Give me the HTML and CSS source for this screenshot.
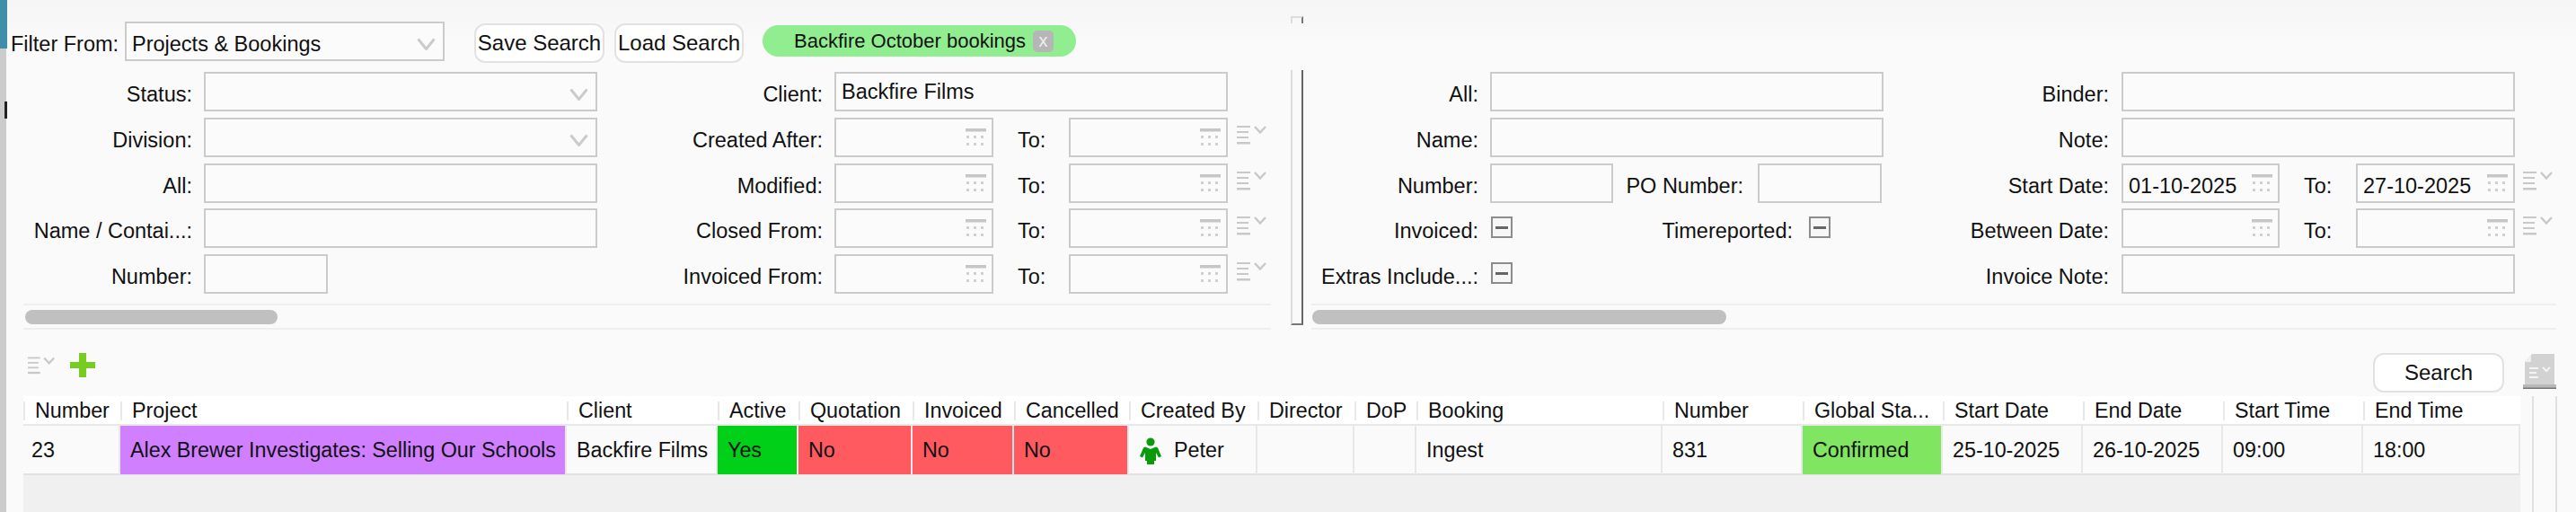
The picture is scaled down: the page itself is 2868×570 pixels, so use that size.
FILE: index.html
```html
<!DOCTYPE html>
<html lang="en">
<head>
<meta charset="utf-8">
<title>Filter bookings</title>
<link rel="stylesheet" href="styles.css">
</head>
<body>
<svg class="sprites" xmlns="http://www.w3.org/2000/svg">
  <symbol id="chev" viewBox="0 0 21 14"><path d="M1.5 1.5 10.5 12.5 19.5 1.5" fill="none" stroke="#cbcbcb" stroke-width="3"/></symbol>
  <symbol id="cal" viewBox="0 0 24 24">
    <rect x="1" y="0" width="23" height="3.5" fill="#c6c6c6"/>
    <g fill="#d0d0d0">
      <rect x="2" y="8" width="3" height="3"/><rect x="10" y="8" width="3" height="3"/><rect x="18" y="8" width="3" height="3"/>
      <rect x="2" y="16" width="3" height="3"/><rect x="10" y="16" width="3" height="3"/><rect x="18" y="16" width="3" height="3"/>
    </g>
  </symbol>
  <symbol id="menu" viewBox="0 0 33 22">
    <g fill="#c8c8c8"><rect x="0" y="0" width="15" height="2"/><rect x="0" y="6" width="13" height="2"/><rect x="0" y="12" width="13" height="2"/><rect x="0" y="18" width="15" height="2.5"/></g>
    <path d="M20 1 26 7.5 32 1" fill="none" stroke="#c8c8c8" stroke-width="2.4"/>
  </symbol>
</svg>
<div class="window">
  <div class="rail"><div class="rail-accent"></div><div class="rail-mark"></div></div>
  <main class="main">
    <header class="topbar">
      <span class="filter-label">Filter From:</span>
      <div class="box combo combo-from"><span class="val">Projects &amp; Bookings</span><svg class="chev"><use href="#chev"/></svg></div>
      <button class="btn btn-save">Save Search</button>
      <button class="btn btn-load">Load Search</button>
      <div class="pill"><span>Backfire October bookings</span><span class="pill-x">x</span></div>
      <div class="tab-notch"></div>
    </header>

    <section class="panels">
      <div class="panel panel-left">
        <div class="form form-left">
          <label class="lab">Status:</label>
          <div class="box combo"><span class="val"></span><svg class="chev"><use href="#chev"/></svg></div>
          <label class="lab">Client:</label>
          <div class="box span3"><span class="val">Backfire Films</span></div>
          <span></span>

          <label class="lab">Division:</label>
          <div class="box combo"><span class="val"></span><svg class="chev"><use href="#chev"/></svg></div>
          <label class="lab">Created After:</label>
          <div class="box date"><span class="val"></span><svg class="cal"><use href="#cal"/></svg></div>
          <label class="lab-to">To:</label>
          <div class="box date"><span class="val"></span><svg class="cal"><use href="#cal"/></svg></div>
          <svg class="menu"><use href="#menu"/></svg>

          <label class="lab">All:</label>
          <div class="box"></div>
          <label class="lab">Modified:</label>
          <div class="box date"><span class="val"></span><svg class="cal"><use href="#cal"/></svg></div>
          <label class="lab-to">To:</label>
          <div class="box date"><span class="val"></span><svg class="cal"><use href="#cal"/></svg></div>
          <svg class="menu"><use href="#menu"/></svg>

          <label class="lab">Name / Contai...:</label>
          <div class="box"></div>
          <label class="lab">Closed From:</label>
          <div class="box date"><span class="val"></span><svg class="cal"><use href="#cal"/></svg></div>
          <label class="lab-to">To:</label>
          <div class="box date"><span class="val"></span><svg class="cal"><use href="#cal"/></svg></div>
          <svg class="menu"><use href="#menu"/></svg>

          <label class="lab">Number:</label>
          <div class="box short"></div>
          <label class="lab">Invoiced From:</label>
          <div class="box date"><span class="val"></span><svg class="cal"><use href="#cal"/></svg></div>
          <label class="lab-to">To:</label>
          <div class="box date"><span class="val"></span><svg class="cal"><use href="#cal"/></svg></div>
          <svg class="menu"><use href="#menu"/></svg>
        </div>
        <div class="strip strip-left"><div class="thumb thumb-left"></div></div>
      </div>

      <div class="divider"></div>

      <div class="panel panel-right">
        <div class="form form-right">
          <label class="lab">All:</label>
          <div class="box wide"></div>
          <label class="lab lab-c5">Binder:</label>
          <div class="box span3"></div>
          <span></span>

          <label class="lab">Name:</label>
          <div class="box wide"></div>
          <label class="lab lab-c5">Note:</label>
          <div class="box span3"></div>
          <span></span>

          <label class="lab">Number:</label>
          <div class="box"></div>
          <label class="lab lab-po">PO Number:</label>
          <div class="box short-po"></div>
          <label class="lab lab-c5">Start Date:</label>
          <div class="box date"><span class="val">01-10-2025</span><svg class="cal"><use href="#cal"/></svg></div>
          <label class="lab-to">To:</label>
          <div class="box date"><span class="val">27-10-2025</span><svg class="cal"><use href="#cal"/></svg></div>
          <svg class="menu"><use href="#menu"/></svg>

          <label class="lab">Invoiced:</label>
          <div class="check-cell"><span class="check"><i></i></span></div>
          <div class="pair">
            <label class="lab lab-time">Timereported:</label>
            <span class="check"><i></i></span>
          </div>
          <label class="lab lab-c5">Between Date:</label>
          <div class="box date"><span class="val"></span><svg class="cal"><use href="#cal"/></svg></div>
          <label class="lab-to">To:</label>
          <div class="box date"><span class="val"></span><svg class="cal"><use href="#cal"/></svg></div>
          <svg class="menu"><use href="#menu"/></svg>

          <label class="lab">Extras Include...:</label>
          <div class="check-cell"><span class="check"><i></i></span></div>
          <span class="gap2"></span>
          <label class="lab lab-c5">Invoice Note:</label>
          <div class="box span3"></div>
          <span></span>
        </div>
        <div class="strip strip-right"><div class="thumb thumb-right"></div></div>
      </div>
    </section>

    <section class="toolbar">
      <svg class="menu menu-tool"><use href="#menu"/></svg>
      <svg class="plus" viewBox="0 0 28 27"><path d="M10 0h8v10h10v7H18v10h-8V17H0v-7h10z" fill="#77cc22"/></svg>
      <button class="btn btn-search">Search</button>
      <svg class="doc" viewBox="0 0 37 39">
        <path d="M10 0H35V34H2V9z" fill="#d2d2d2"/>
        <path d="M9 1V9H2z" fill="#f0f0f0"/>
        <g fill="#f4f4f4"><rect x="7" y="15" width="10" height="2"/><rect x="7" y="20" width="8" height="2"/><rect x="7" y="25" width="10" height="2"/></g>
        <path d="M22 15l4 4 4-4" fill="none" stroke="#f4f4f4" stroke-width="2"/>
        <rect x="0" y="34" width="37" height="5" fill="#b8b8b8"/>
        <rect x="0" y="37.5" width="37" height="1.5" fill="#777"/>
      </svg>
    </section>

    <section class="lower">
      <div class="results">
        <div class="grid head">
          <div>Number</div><div>Project</div><div>Client</div><div>Active</div><div>Quotation</div><div>Invoiced</div><div>Cancelled</div><div>Created By</div><div>Director</div><div>DoP</div><div>Booking</div><div>Number</div><div>Global Sta...</div><div>Start Date</div><div>End Date</div><div>Start Time</div><div>End Time</div>
        </div>
        <div class="grid row">
          <div class="c-first">23</div>
          <div class="c-purple">Alex Brewer Investigates: Selling Our Schools</div>
          <div>Backfire Films</div>
          <div class="c-green">Yes</div>
          <div class="c-red">No</div>
          <div class="c-red">No</div>
          <div class="c-red">No</div>
          <div class="user">
            <svg class="person" viewBox="0 0 24 30">
              <circle cx="12" cy="5" r="4.6" fill="#0a9a0a"/>
              <path d="M6 10.5 12 13 18 10.5 20 11.5 24 21 21 22.5 18 17V26H16V30H8V26H6V17L3 22.5 0 21 4 11.5z" fill="#0a9a0a"/>
            </svg>
            <span>Peter</span>
          </div>
          <div></div>
          <div></div>
          <div>Ingest</div>
          <div>831</div>
          <div class="c-conf">Confirmed</div>
          <div>25-10-2025</div>
          <div>26-10-2025</div>
          <div>09:00</div>
          <div>18:00</div>
        </div>
      </div>
      <div class="side-lines"></div>
    </section>
  </main>
</div>
</body>
</html>
```

FILE: styles.css
```css
* { box-sizing: border-box; }

html, body {
  margin: 0;
  padding: 0;
  background: #fafafa;
}

body {
  font-family: "Liberation Sans", Arial, sans-serif;
  font-size: 23.5px;
  color: #111;
  overflow: hidden;
}

.sprites { display: none; }

.window {
  display: flex;
  width: 2868px;
  height: 570px;
  overflow: hidden;
  background: #fafafa;
}

/* left window edge */
.rail {
  flex: 0 0 8px;
  display: flex;
  flex-direction: column;
  background: linear-gradient(to right, #cccccc 7px, #fafafa 7px);
}
.rail-accent {
  height: 54px;
  background: #3f8fa8;
}
.rail-mark {
  width: 3px;
  height: 19px;
  margin: 59px 0 0 5px;
  background: #222;
}

.main {
  flex: 1;
  display: flex;
  flex-direction: column;
  min-width: 0;
}

/* top row */
.topbar {
  flex: 0 0 80px;
  display: flex;
  align-items: flex-start;
  padding: 24px 0 0 4px;
  background: linear-gradient(to bottom, #f5f5f5 0, #fafafa 50px);
}
.filter-label {
  width: 127px;
  line-height: 44px;
  padding-top: 3px;
  white-space: nowrap;
}
.combo-from { width: 356px; }
.combo-from .val { padding-top: 6px; }

.btn {
  font: inherit;
  font-size: 24px;
  color: #111;
  height: 44px;
  padding: 0;
  background: #fff;
  border: 2px solid #e2e2e2;
  border-radius: 12px;
  white-space: nowrap;
}
.btn-save { width: 145px; margin: 2px 0 0 33px; }
.btn-load { width: 144px; margin: 2px 0 0 11px; }

.pill {
  display: flex;
  align-items: center;
  width: 349px;
  height: 35px;
  margin: 4px 0 0 21px;
  padding-left: 35px;
  font-size: 22px;
  background: #90ee90;
  border-radius: 18px;
  white-space: nowrap;
}
.pill-x {
  width: 23px;
  height: 24px;
  margin-left: 8px;
  border-radius: 5px;
  background: #b6b6b6;
  color: #eee;
  font-size: 20px;
  line-height: 22px;
  text-align: center;
}

.tab-notch {
  width: 14px;
  height: 8px;
  margin: -6px 0 0 239px;
  border-top: 2px solid #ddd;
  border-left: 2px solid #ddd;
  border-right: 2px solid #777;
}

/* form panels */
.panels {
  flex: 0 0 300px;
  display: flex;
  align-items: flex-start;
}
.panel-left { flex: 0 0 1429px; }
.panel-right { flex: 0 0 auto; }

.divider {
  flex: 0 0 14px;
  height: 284px;
  margin-top: -2px;
  border-left: 2px solid #dcdcdc;
  border-right: 2px solid #666;
  border-bottom: 2px solid #777;
}

.form {
  display: grid;
  grid-auto-rows: 44px;
  row-gap: 6.75px;
}
.form-left {
  grid-template-columns: 219px 438px 264px 177px 84px 177px 43px;
}
.form-right {
  grid-template-columns: 208px 137px 161px 140px 265px 176px 85px 177px 41px;
}

.lab {
  display: block;
  line-height: 44px;
  padding: 3px 13px 0 0;
  text-align: right;
  white-space: nowrap;
}
.lab-c5 { padding-right: 14px; }
.lab-po { padding-right: 16px; }
.lab-to {
  display: block;
  line-height: 44px;
  padding: 3px 0 0 27px;
}

.box {
  display: flex;
  align-items: center;
  min-width: 0;
  height: 44px;
  border: 2px solid #cbcbcb;
  background: #fbfbfb;
}
.val {
  flex: 1;
  padding-left: 6px;
  white-space: nowrap;
}
.span3 { grid-column: span 3; }
.wide { grid-column: span 3; }
.short { width: 138px; }
.short-po { width: 138px; }

.chev {
  flex: 0 0 21px;
  width: 21px;
  height: 14px;
  margin: 6px 8px 0 0;
}
.date { align-items: stretch; }
.date .val { line-height: 40px; padding-top: 3px; }
.cal {
  flex: 0 0 24px;
  width: 24px;
  height: 24px;
  margin: 10px 6px 0 0;
}
.menu {
  width: 33px;
  height: 22px;
  margin: 9px 0 0 10px;
}
.form-right .menu { margin-left: 9px; }

/* checkboxes */
.check-cell { padding: 9px 0 0 1px; }
.check {
  display: block;
  width: 24px;
  height: 24px;
  padding-top: 9px;
  border: 2px solid #8c8c8c;
  background: #f6f6f6;
}
.check i {
  display: block;
  width: 14px;
  height: 3px;
  margin: 0 auto;
  background: #666;
}
.pair {
  grid-column: span 2;
  display: flex;
  align-items: flex-start;
}
.pair .check { margin-top: 9px; }
.lab-time {
  width: 218px;
  padding-right: 18px;
}
.gap2 { grid-column: span 2; }

/* scroll strips */
.strip {
  height: 29px;
  margin-top: 11px;
  padding-top: 5px;
  border-top: 2px solid #eeeeee;
  border-bottom: 2px solid #eeeeee;
}
.strip-left { width: 1389px; margin-left: 18px; }
.strip-right { width: 1386px; margin-left: 9px; }
.thumb {
  height: 16px;
  border-radius: 8px;
  background: #c0c0c0;
}
.thumb-left { width: 281px; margin-left: 2px; }
.thumb-right { width: 461px; margin-left: 1px; }

/* toolbar above results */
.toolbar {
  flex: 0 0 61px;
  display: flex;
  align-items: flex-start;
  padding-left: 23px;
}
.menu-tool {
  width: 30px;
  height: 21px;
  margin: 17px 0 0 0;
}
.plus {
  width: 28px;
  height: 27px;
  margin: 13px 0 0 17px;
}
.btn-search {
  width: 146px;
  margin: 13px 0 0 2536px;
}
.doc {
  width: 37px;
  height: 39px;
  margin: 14px 0 0 21px;
}

/* results */
.lower {
  flex: 1;
  display: flex;
  padding-left: 18px;
}
.results {
  flex: 0 0 2780px;
  background: #f0f0f0;
}
.side-lines {
  width: 28px;
  margin-left: 13px;
  border-left: 2px solid #e0e0e0;
  border-right: 2px solid #e0e0e0;
}
.grid {
  display: grid;
  grid-template-columns: 108px 497px 168px 90px 127px 113px 128px 143px 108px 69px 274px 156px 156px 156px 156px 156px 175px;
  white-space: nowrap;
}
.head {
  height: 33px;
  padding: 6px 0 4px;
  background: #fff;
  border-bottom: 2px solid #e8e8e8;
}
.head > div {
  line-height: 21px;
  padding: 0 0 0 11px;
  border-left: 2px solid #e8e8e8;
  font-size: 23.3px;
}
.row {
  height: 55px;
  background: #fafafa;
  border-bottom: 2px solid #e2e2e2;
  font-size: 23.3px;
}
.row > div {
  line-height: 53px;
  padding-left: 11px;
  padding-top: 1px;
  border-right: 2px solid #e8e8e8;
}
.row > .c-first { padding-left: 9px; }
.c-purple { background: #cf7fff; }
.c-green { background: #00d018; }
.c-red { background: #ff5a60; }
.c-conf { background: #80e560; }

.row > .user {
  display: flex;
  align-items: center;
  padding-left: 12px;
}
.person {
  flex: 0 0 24px;
  width: 24px;
  height: 30px;
  margin: 0 14px 0 0;
}
```
